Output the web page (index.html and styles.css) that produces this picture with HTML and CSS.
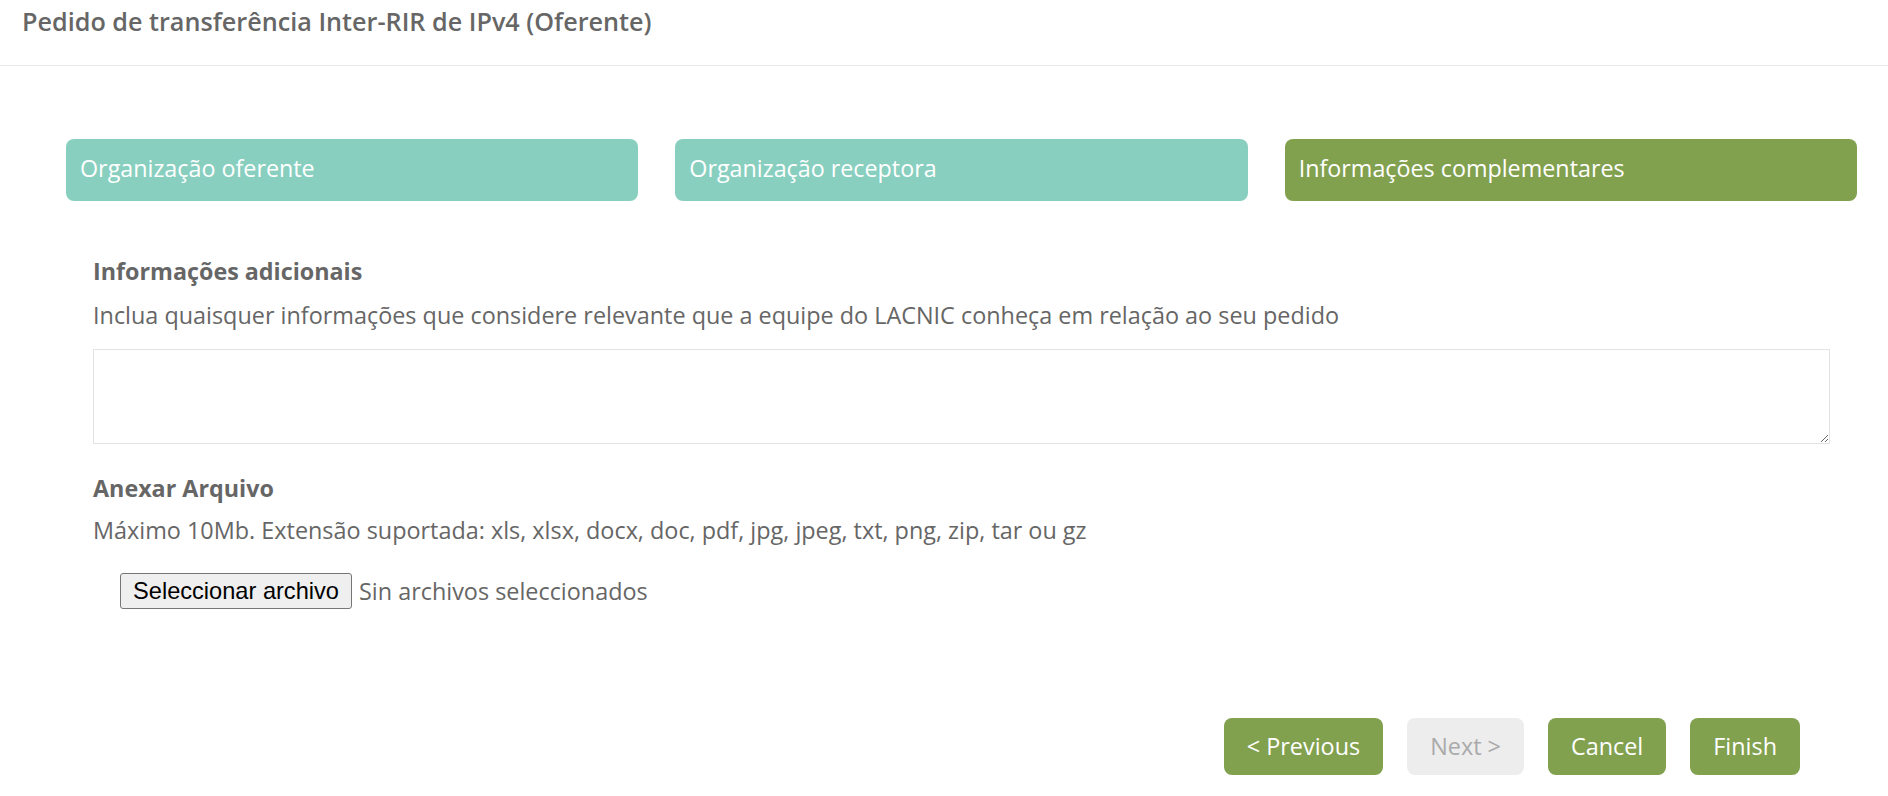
FILE: index.html
```html
<!DOCTYPE html>
<html lang="pt">
<head>
<meta charset="utf-8">
<title>Pedido de transferência Inter-RIR de IPv4 (Oferente)</title>
<link rel="stylesheet" href="styles.css">
</head>
<body>
<header class="page-header">
  <h1 class="page-title">Pedido de transferência Inter-RIR de IPv4 (Oferente)</h1>
</header>
<main class="wizard">
  <ol class="steps">
    <li class="step step-done">Organização oferente</li>
    <li class="step step-done">Organização receptora</li>
    <li class="step step-active">Informações complementares</li>
  </ol>
  <section class="form">
    <h2 class="field-label">Informações adicionais</h2>
    <p class="field-help">Inclua quaisquer informações que considere relevante que a equipe do LACNIC conheça em relação ao seu pedido</p>
    <textarea class="field-text"></textarea>
    <h2 class="field-label label-attach">Anexar Arquivo</h2>
    <p class="field-help">Máximo 10Mb. Extensão suportada: xls, xlsx, docx, doc, pdf, jpg, jpeg, txt, png, zip, tar ou gz</p>
    <label class="file-row">
      <span class="file-btn">Seleccionar archivo</span>
      <span class="file-name">Sin archivos seleccionados</span>
    </label>
  </section>
  <nav class="actions">
    <button class="btn btn-green">&lt; Previous</button>
    <button class="btn btn-disabled">Next &gt;</button>
    <button class="btn btn-green">Cancel</button>
    <button class="btn btn-green">Finish</button>
  </nav>
</main>
</body>
</html>
```

FILE: styles.css
```css
* { box-sizing: border-box; }
html, body { margin: 0; padding: 0; background: #fff; }
body {
  font-family: "Open Sans", "DejaVu Sans", sans-serif;
  color: #666;
  width: 1888px;
  height: 796px;
  overflow: hidden;
}
.page-header {
  height: 66px;
  border-bottom: 1px solid #e9e9e9;
  padding: 4px 0 0 22px;
}
.page-title {
  margin: 0;
  font-size: 25.2px;
  font-weight: 600;
  line-height: 34px;
  color: #666;
}
.wizard { padding-top: 73px; }
.steps {
  list-style: none;
  margin: 0;
  padding: 0 31px 0 66px;
  display: grid;
  grid-template-columns: repeat(3, 1fr);
  column-gap: 37px;
}
.step {
  height: 62px;
  border-radius: 8px;
  padding: 0 14px;
  color: #fff;
  font-size: 23.3px;
  line-height: 58px;
}
.step-done { background: #88cfbf; }
.step-active { background: #82a14f; }
.form {
  padding: 54px 58px 0 93px;
}
.field-label {
  margin: 0;
  font-size: 23.3px;
  font-weight: 700;
  line-height: 32px;
  color: #666;
}
.field-help {
  margin: 12px 0 0;
  font-size: 23.4px;
  line-height: 32px;
  color: #666;
}
.field-text {
  display: block;
  width: 100%;
  height: 95px;
  margin-top: 18px;
  border: 1px solid #e3e3e3;
  border-radius: 0;
  resize: vertical;
  font-family: inherit;
  outline: none;
}
.label-attach { margin-top: 28px; }
.label-attach + .field-help { margin-top: 10px; }
.file-row {
  display: flex;
  align-items: center;
  gap: 7px;
  margin: 27px 0 0 27px;
  height: 36px;
}
.file-btn {
  width: 232px;
  height: 36px;
  border: 1px solid #767676;
  border-radius: 3px;
  background: #efefef;
  color: #000;
  font-family: "Liberation Sans", Arial, sans-serif;
  font-size: 23.6px;
  line-height: 34px;
  text-align: center;
}
.file-name {
  font-size: 23.4px;
  color: #666;
}
.actions {
  display: flex;
  justify-content: flex-end;
  gap: 24px;
  padding: 109px 88px 0 0;
}
.btn {
  height: 57px;
  padding: 0 23px 2px;
  border: 0;
  border-radius: 8px;
  font-family: "Open Sans", sans-serif;
  font-size: 23.4px;
  line-height: 52px;
  color: #fff;
  cursor: pointer;
}
.btn-green { background: #82a14f; }
.btn-disabled { background: #ededed; color: #aaa; cursor: default; }
```
